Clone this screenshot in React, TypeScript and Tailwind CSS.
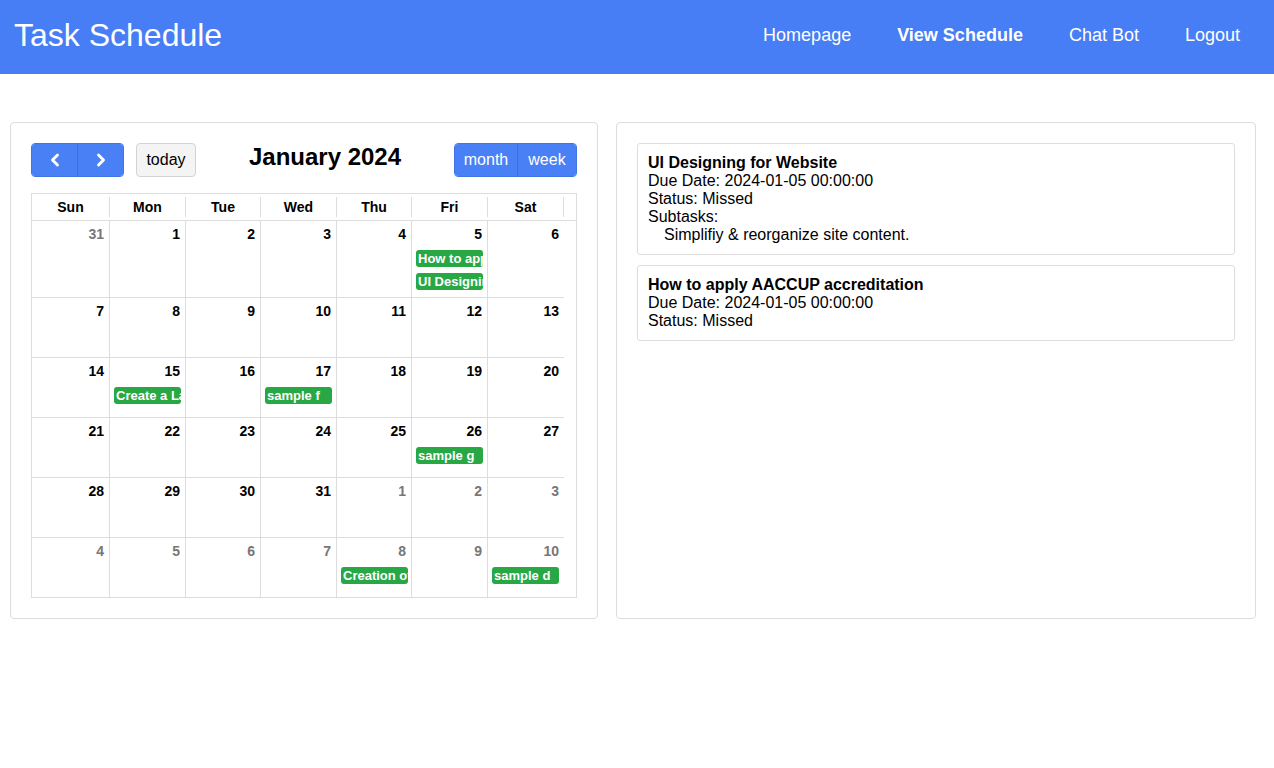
import { ChevronLeft, ChevronRight } from "lucide-react"

type Day = { n: number; other?: boolean; events?: string[] }

const weeks: Day[][] = [
  [{ n: 31, other: true }, { n: 1 }, { n: 2 }, { n: 3 }, { n: 4 }, { n: 5, events: ["How to apply AACCUP accreditation", "UI Designing for Website"] }, { n: 6 }],
  [{ n: 7 }, { n: 8 }, { n: 9 }, { n: 10 }, { n: 11 }, { n: 12 }, { n: 13 }],
  [{ n: 14 }, { n: 15, events: ["Create a Landing Page"] }, { n: 16 }, { n: 17, events: ["sample f"] }, { n: 18 }, { n: 19 }, { n: 20 }],
  [{ n: 21 }, { n: 22 }, { n: 23 }, { n: 24 }, { n: 25 }, { n: 26, events: ["sample g"] }, { n: 27 }],
  [{ n: 28 }, { n: 29 }, { n: 30 }, { n: 31 }, { n: 1, other: true }, { n: 2, other: true }, { n: 3, other: true }],
  [{ n: 4, other: true }, { n: 5, other: true }, { n: 6, other: true }, { n: 7, other: true }, { n: 8, other: true, events: ["Creation of Module"] }, { n: 9, other: true }, { n: 10, other: true, events: ["sample d"] }],
]

const rowHeights = ["h-[77px] border-b", "h-[60px] border-b", "h-[60px] border-b", "h-[60px] border-b", "h-[60px] border-b", "h-[59px]"]

const dayNames = ["Sun", "Mon", "Tue", "Wed", "Thu", "Fri", "Sat"]

const tasks = [
  {
    title: "UI Designing for Website",
    due: "2024-01-05 00:00:00",
    status: "Missed",
    subtasks: ["Simplifiy & reorganize site content."],
  },
  {
    title: "How to apply AACCUP accreditation",
    due: "2024-01-05 00:00:00",
    status: "Missed",
    subtasks: [],
  },
]

function Calendar() {
  return (
    <div className="w-[588px] border border-[#ddd] rounded-[4px] p-[20px]">
      {/* toolbar */}
      <div className="flex items-center justify-between h-[34px]">
        <div className="flex items-center gap-[12px]">
          <div className="flex h-[34px] rounded-[4px] overflow-hidden border border-[#3f73e6]">
            <button className="w-[46px] bg-[#4a80f5] flex items-center justify-center text-white border-r border-[#3f6fd6]">
              <ChevronLeft size={20} strokeWidth={3.5} />
            </button>
            <button className="w-[45px] bg-[#4a80f5] flex items-center justify-center text-white">
              <ChevronRight size={20} strokeWidth={3.5} />
            </button>
          </div>
          <button className="h-[34px] w-[60px] bg-[#f4f4f4] border border-[#d3d3d3] rounded-[4px] text-[16px] text-black">
            today
          </button>
        </div>
        <h2 className="text-[24px] font-bold text-black -mt-[6px]">January 2024</h2>
        <div className="flex h-[34px] rounded-[4px] overflow-hidden border border-[#3f73e6] text-white text-[16px]">
          <button className="w-[63px] bg-[#4a80f5] border-r border-[#3f6fd6]">month</button>
          <button className="w-[58px] bg-[#4a80f5]">week</button>
        </div>
      </div>

      {/* grid */}
      <div className="mt-[16px] border border-[#ddd]">
        <div className="flex border-b border-[#ddd]">
          <div className="w-[532px] grid grid-cols-[78px_76px_75px_76px_75px_76px_76px]">
            {dayNames.map((d) => (
              <div key={d} className="my-[3px] h-[20px] border-r border-[#ddd] text-center text-[14px] font-bold leading-[20px] text-black">
                {d}
              </div>
            ))}
          </div>
        </div>
        <div className="w-[532px]">
          {weeks.map((week, wi) => (
            <div key={wi} className={`grid grid-cols-[78px_76px_75px_76px_75px_76px_76px] border-[#ddd] ${rowHeights[wi]}`}>
              {week.map((day, di) => (
                <div key={di} className={`pt-[5px] ${di < 6 ? "border-r border-[#ddd]" : ""}`}>
                  <div className={`text-right pr-[5px] text-[14px] font-bold leading-[16px] ${day.other ? "text-[#777]" : "text-black"}`}>
                    {day.n}
                  </div>
                  {day.events && (
                    <div className="mt-[8px] flex flex-col gap-[6px]">
                      {day.events.map((e) => (
                        <div
                          key={e}
                          className="ml-[4px] w-[67px] h-[17px] bg-[#28a745] rounded-[3px] pl-[2px] overflow-hidden whitespace-nowrap text-white text-[13px] font-bold leading-[17px]"
                        >
                          {e}
                        </div>
                      ))}
                    </div>
                  )}
                </div>
              ))}
            </div>
          ))}
        </div>
      </div>
    </div>
  )
}

function TaskList() {
  return (
    <div className="flex-1 border border-[#ddd] rounded-[4px] p-[20px]">
      <div className="flex flex-col gap-[10px]">
        {tasks.map((t) => (
          <div key={t.title} className="border border-[#ddd] rounded-[3px] p-[10px] text-[16px] leading-[18px] text-black">
            <div className="font-bold">{t.title}</div>
            <div>Due Date: {t.due}</div>
            <div>Status: {t.status}</div>
            {t.subtasks.length > 0 && (
              <>
                <div>Subtasks:</div>
                {t.subtasks.map((s) => (
                  <div key={s} className="pl-[16px]">
                    {s}
                  </div>
                ))}
              </>
            )}
          </div>
        ))}
      </div>
    </div>
  )
}

export default function App() {
  return (
    <div className="min-h-screen bg-white font-['Liberation_Sans',Arial,sans-serif]">
      <nav className="h-[74px] bg-[#477ef5] flex items-center justify-between pl-[14px] pr-[34px] pb-[4px] text-white">
        <h1 className="text-[32px] font-normal">Task Schedule</h1>
        <div className="flex items-center gap-[46px] text-[18px]">
          <a href="#">Homepage</a>
          <a href="#" className="font-bold">View Schedule</a>
          <a href="#">Chat Bot</a>
          <a href="#">Logout</a>
        </div>
      </nav>
      <main className="flex items-stretch gap-[18px] pl-[10px] pr-[18px] mt-[48px]">
        <Calendar />
        <TaskList />
      </main>
    </div>
  )
}
